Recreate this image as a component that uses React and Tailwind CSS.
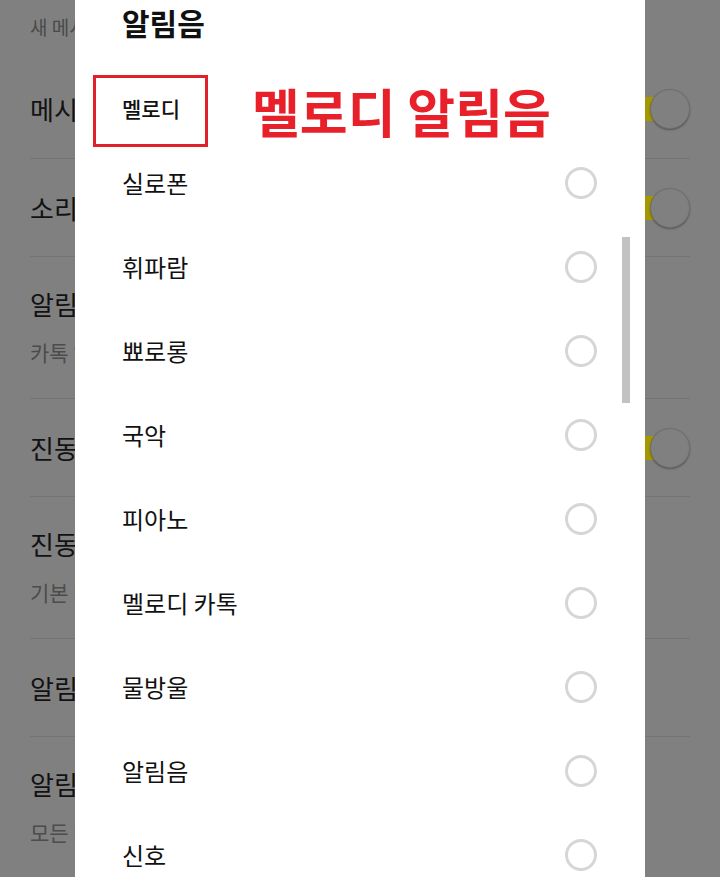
import React from "react"

const font = { fontFamily: '"Noto Sans CJK KR", "Noto Sans", sans-serif' }

const settings = [
  { title: "메시지 알림", toggle: true },
  { title: "소리 알림", toggle: true },
  { title: "알림음", sub: "카톡 알림음" },
  { title: "진동 알림", toggle: true },
  { title: "진동 알림음", sub: "기본 진동" },
  { title: "알림센터 표시" },
  { title: "알림 미리보기", sub: "모든 메시지" },
]

const sounds = ["실로폰", "휘파람", "뾰로롱", "국악", "피아노", "멜로디 카톡", "물방울", "알림음", "신호"]

const Toggle = () => (
  <div className="relative w-[58px] h-[38px] flex items-center">
    <div className="w-[54px] h-[24px] rounded-full bg-[#a59700]" />
    <div className="absolute right-0 w-[40px] h-[40px] rounded-full bg-[#808080] border border-[#6f6f6f] shadow-[0_1px_2px_rgba(0,0,0,0.35)]" />
  </div>
)

const Radio = () => <div className="w-[32px] h-[32px] rounded-full border-[3px] border-[#d6d6d6]" />

export default function App() {
  return (
    <div className="relative w-[720px] h-[877px] overflow-hidden bg-[#808080]" style={font}>
      {/* settings page behind, dimmed */}
      <div className="px-[30px]">
        <div className="pt-[12px] pb-[18px] text-[19px] text-[#4a4a4a] leading-[30px]">새 메시지 알림</div>
        {settings.map((s, i) =>
          s.sub ? (
            <div key={i} className="h-[142px] border-t border-[#747474] pt-[31px]">
              <div className="text-[26px] text-[#121212] leading-[32px]">{s.title}</div>
              <div className="text-[21px] text-[#4c4c4c] leading-[26px] mt-[19px]">{s.sub}</div>
            </div>
          ) : (
            <div
              key={i}
              className={`h-[98px] flex items-center justify-between ${i === 0 ? "" : "border-t border-[#747474]"}`}
            >
              <div className="text-[26px] text-[#121212] leading-[32px]">{s.title}</div>
              {s.toggle && <Toggle />}
            </div>
          )
        )}
      </div>

      {/* dialog */}
      <div className="absolute left-[75px] top-0 w-[570px] h-[877px] bg-white">
        <div className="pl-[47px] pt-[2px] text-[30px] font-bold text-[#111] leading-[40px]">알림음</div>
        <div className="pl-[47px] h-[64px] mt-[35px] flex items-center text-[21px] font-medium text-[#111]">멜로디</div>
        <div className="relative">
          {sounds.map((s) => (
            <div key={s} className="h-[84px] pl-[47px] pr-[48px] flex items-center justify-between">
              <span className="text-[24px] text-[#111]">{s}</span>
              <Radio />
            </div>
          ))}
          <div className="absolute left-[547px] top-[96px] w-[8px] h-[166px] bg-[#c2c2c2]" />
        </div>
      </div>

      {/* annotation */}
      <div className="absolute left-[93px] top-[75px] w-[115px] h-[72px] border-[3px] border-[#e0202a]" />
      <div className="absolute left-[252px] top-[76px] text-[52px] font-bold text-[#e8202a] leading-[70px]">멜로디 알림음</div>
    </div>
  )
}
